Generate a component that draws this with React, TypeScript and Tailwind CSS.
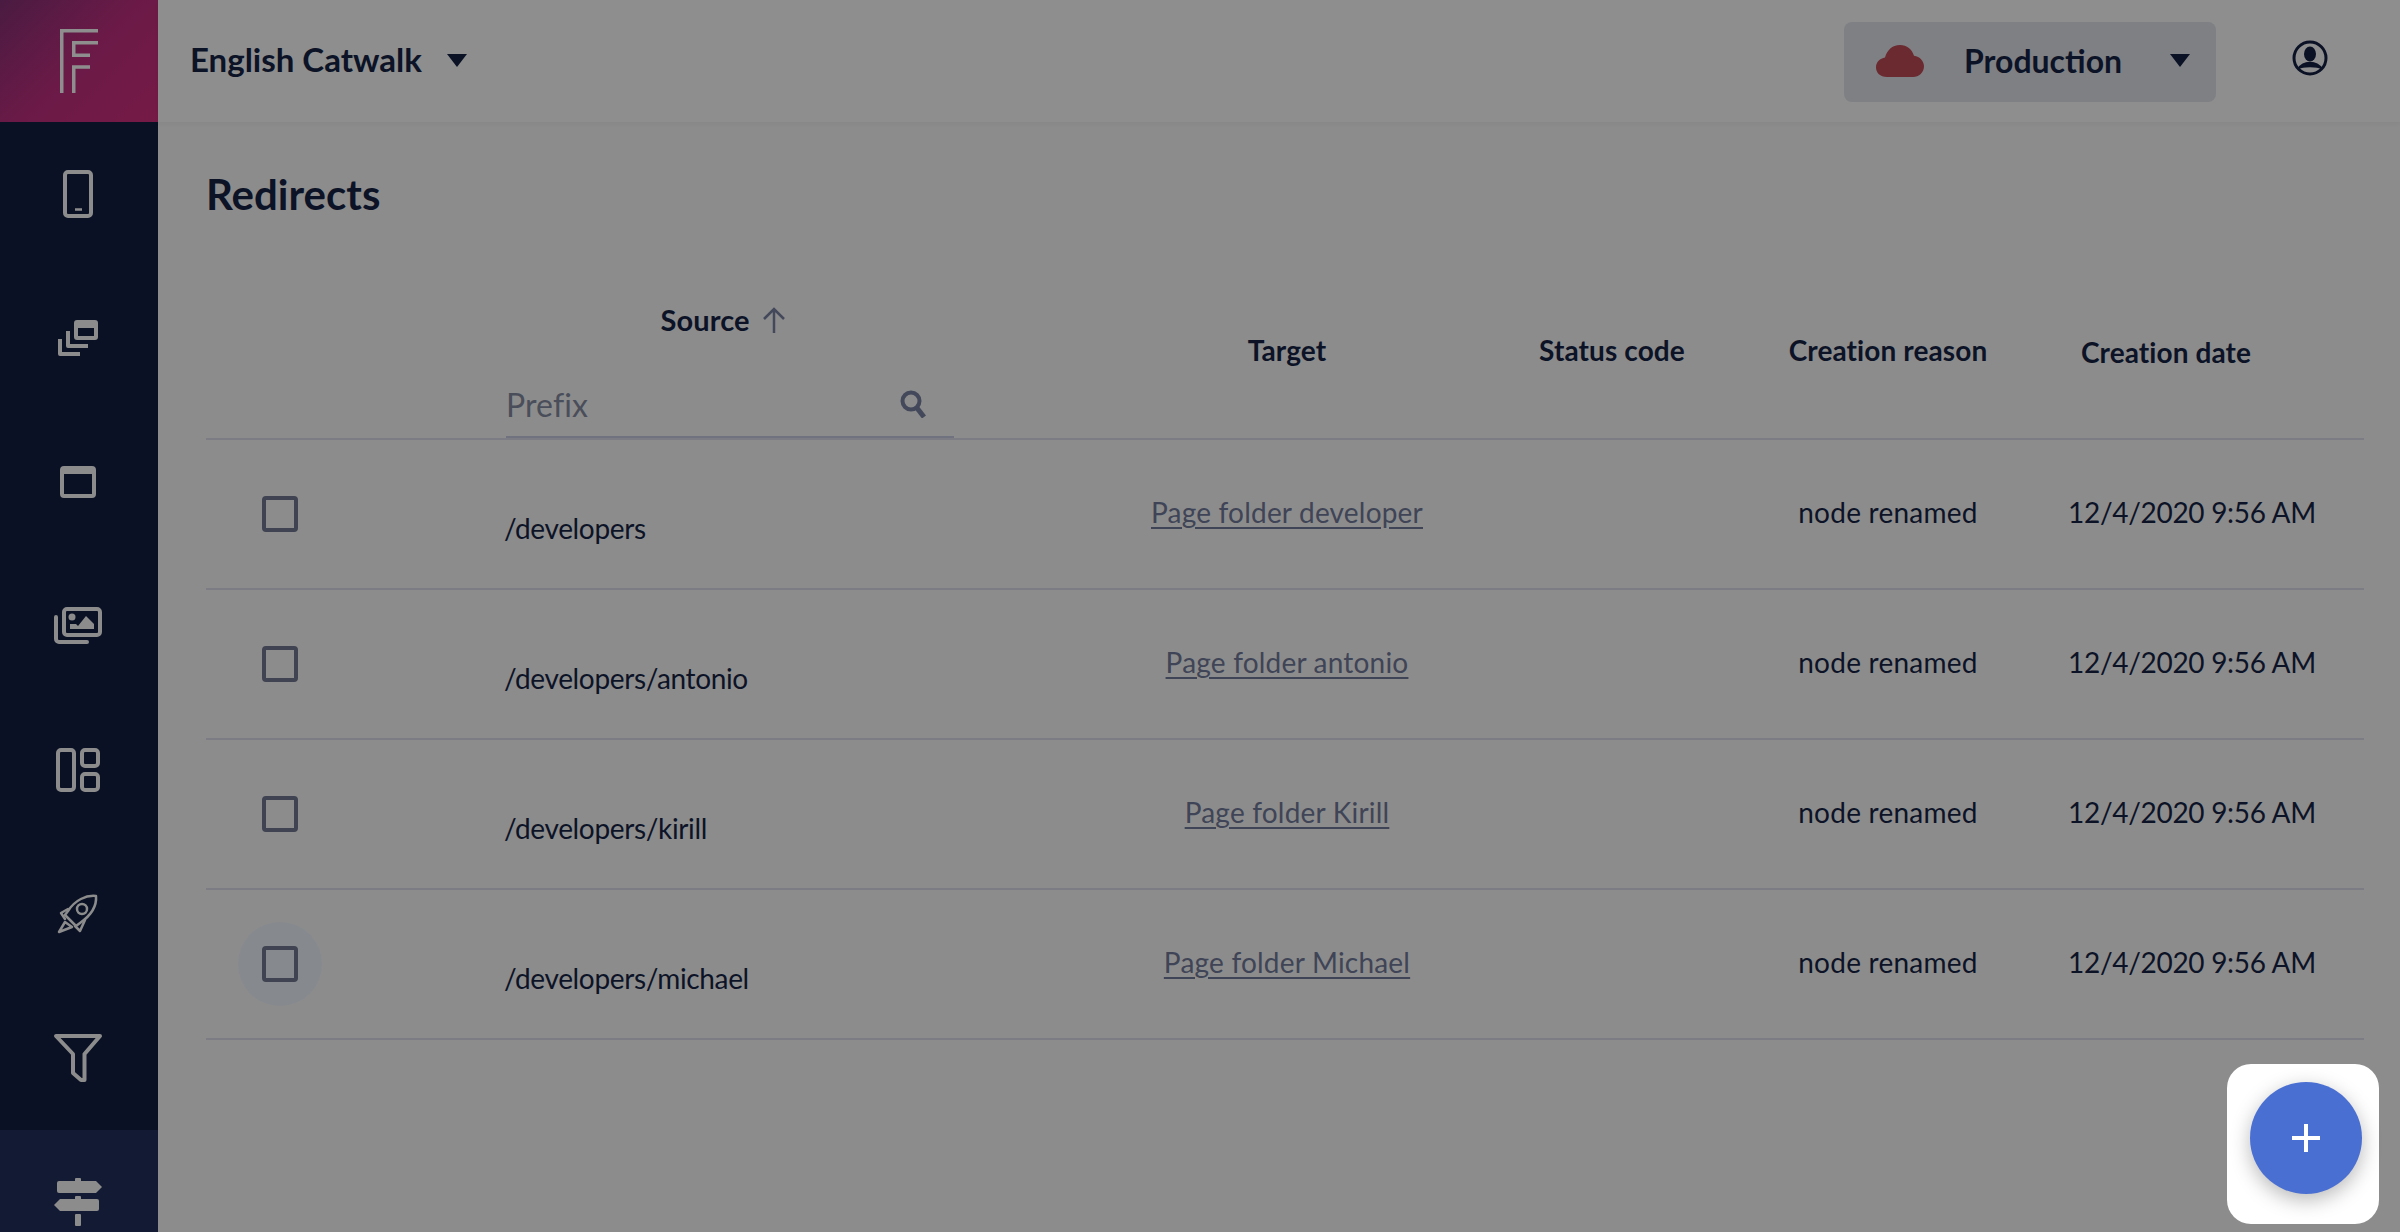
const rows = [
  { source: "/developers", target: "Page folder developer" },
  { source: "/developers/antonio", target: "Page folder antonio" },
  { source: "/developers/kirill", target: "Page folder Kirill" },
  { source: "/developers/michael", target: "Page folder Michael", hover: true },
];

const gridCols = "grid grid-cols-[148px_752px_362px_288px_264px_292px_52px]";

function NavIcon({ children }: { children: React.ReactNode }) {
  return (
    <svg width="60" height="60" viewBox="0 0 60 60" fill="none" stroke="#8c8c8c" strokeWidth="4" strokeLinejoin="round" strokeLinecap="round">
      {children}
    </svg>
  );
}

const navIcons = [
  <NavIcon key="phone">
    <rect x="16" y="8" width="26" height="44" rx="3" />
    <path d="M26 45.5H33" strokeWidth="2.5" strokeLinecap="butt" />
  </NavIcon>,
  <NavIcon key="stack">
    <path fillRule="evenodd" fill="#8c8c8c" stroke="none" d="M28 12H46A3 3 0 0 1 49 15V29A3 3 0 0 1 46 32H28A3 3 0 0 1 25 29V15A3 3 0 0 1 28 12ZM29 20V28H45V20Z" />
    <path d="M19 23V38H39M11 31V46H31" strokeLinecap="butt" strokeLinejoin="round" />
  </NavIcon>,
  <NavIcon key="window">
    <rect x="13" y="16" width="32" height="28" rx="2" />
    <rect x="13" y="15" width="32" height="7" fill="#8c8c8c" stroke="none" />
  </NavIcon>,
  <NavIcon key="images">
    <rect x="15" y="13" width="36" height="26" rx="3" />
    <path d="M7 21V43A3 3 0 0 0 10 46H38" />
    <circle cx="23" cy="21" r="3.5" fill="#8c8c8c" stroke="none" />
    <path d="M21 33V28H27L29 30L37 20L45 28V33Z" fill="#8c8c8c" stroke="none" />
  </NavIcon>,
  <NavIcon key="layout">
    <rect x="9" y="10" width="16" height="40" rx="3" />
    <rect x="33" y="10" width="16" height="16" rx="3" />
    <rect x="33" y="34" width="16" height="16" rx="3" />
  </NavIcon>,
  <NavIcon key="rocket">
    <g strokeWidth="2.5">
      <path d="M47 12C37 11 26 16 19 27L16 31L27 42L31 39C41 32 48 23 47 12Z" />
      <path d="M19 25L12 29L16 35M36 36L31 47L26 42" />
      <path d="M16 38L10 48L23 43Z" />
      <circle cx="33" cy="25" r="5" />
    </g>
  </NavIcon>,
  <NavIcon key="filter">
    <path d="M7 8H51L35.5 26V52H32L24 45V26Z" />
  </NavIcon>,
  <NavIcon key="sign">
    <g fill="#8c8c8c" stroke="none">
      <path d="M10 9H47L53 15L47 21H10A2 2 0 0 1 8 19V11A2 2 0 0 1 10 9Z" />
      <path d="M11 27H48A2 2 0 0 1 50 29V37A2 2 0 0 1 48 39H11L5 33Z" />
      <rect x="26" y="6" width="6" height="4" rx="1" />
      <rect x="26" y="24" width="6" height="4" rx="1" />
      <rect x="26" y="42" width="6" height="12" rx="1" />
    </g>
  </NavIcon>,
];

function Logo() {
  return (
    <svg width="38" height="64" viewBox="0 0 38 64" fill="none" stroke="#8e8e8e" strokeWidth="3.5">
      <path d="M1.750 64V1.750H38" />
      <path d="M38 13.750H13.750V26.250H30" />
      <path d="M13.750 64V38H30" />
    </svg>
  );
}

function Caret() {
  return (
    <svg width="20" height="13" viewBox="0 0 20 13">
      <path d="M0 0H20L10 13Z" fill="#0b1226" />
    </svg>
  );
}

function SourceArrow() {
  return (
    <svg width="24" height="26" viewBox="0 0 24 26" fill="none" stroke="#43485a" strokeWidth="2.5">
      <path d="M12 26V2M2 12L12 2L22 12" />
    </svg>
  );
}

export default function App() {
  return (
    <div className="relative flex h-[1232px] w-[2400px] overflow-hidden bg-[#8c8c8c] font-['Lato',sans-serif] text-[#0c1327]">
      <aside className="flex w-[158px] shrink-0 flex-col bg-[#0a1124]">
        <div className="flex h-[122px] shrink-0 items-center justify-center bg-[linear-gradient(135deg,#4a1b42_0%,#6b1a47_50%,#761a47_100%)]">
          <Logo />
        </div>
        {navIcons.map((icon, i) => (
          <div key={i} className={`flex h-[144px] shrink-0 items-center justify-center ${i === 7 ? "bg-[#121b33]" : ""}`}>
            {icon}
          </div>
        ))}
      </aside>

      <div className="flex min-w-0 flex-1 flex-col">
        <header className="flex h-[122px] shrink-0 items-center bg-[#8e8e8e] pl-[32px] shadow-[0_2px_4px_rgba(0,0,0,0.04)]">
          <span className="mb-[4px] text-[33px] font-bold leading-none">English Catwalk</span>
          <span className="ml-[25px] mb-[1px] flex"><Caret /></span>
          <div className="ml-auto mt-[2px] flex h-[80px] w-[372px] items-center rounded-[8px] bg-[#7f8084] pl-[32px] pr-[26px]">
            <svg className="mb-[2px]" width="48" height="32" viewBox="0 0 48 36" preserveAspectRatio="none">
              <path d="M11 36C4 36 0 31 0 25C0 19 4 15 9 14C11 6 16 0 24 0C31 0 36 5 38 12C44 13 48 18 48 24C48 31 43 36 37 36Z" fill="#6a2a30" />
            </svg>
            <span className="ml-[40px] mb-[2px] text-[32px] font-bold leading-none">Production</span>
            <span className="ml-auto mb-[4px] flex"><Caret /></span>
          </div>
          <div className="ml-[76px] mr-[72px] mb-[6px] flex">
            <svg width="36" height="36" viewBox="0 0 36 36" fill="none">
              <circle cx="18" cy="18" r="16" stroke="#0b1226" strokeWidth="3" />
              <ellipse cx="18" cy="14" rx="6" ry="7.5" fill="#0b1226" />
              <path d="M6 29C9 24 13 22.500 18 22.500C23 22.500 27 24 30 29C26 25.500 10 25.500 6 29Z" fill="#0b1226" stroke="#0b1226" strokeWidth="1.500" />
            </svg>
          </div>
        </header>

        <main className="min-h-0 flex-1 pl-[48px] pr-[36px]">
          <h1 className="flex h-[144px] items-center text-[42px] font-bold leading-none">Redirects</h1>

          <div className={`${gridCols} h-[174px] border-b-2 border-[#7c7d84] text-[28px] font-bold leading-[32px] tracking-[0.1px]`}>
            <div />
            <div className="flex flex-col items-center pt-[38px]">
              <div className="mr-[14px] flex items-center gap-[12px]">
                <span className="text-[29px]">Source</span>
                <SourceArrow />
              </div>
              <div className="mt-[44px] flex h-[58px] w-[448px] items-center justify-between border-b-2 border-[#70727f] pb-[8px] font-normal">
                <input
                  readOnly
                  placeholder="Prefix"
                  className="w-[300px] bg-transparent text-[32px] outline-none placeholder:text-[#4a4e5a]"
                />
                <svg className="mr-[28px]" width="26" height="28" viewBox="0 0 26 28" fill="none" stroke="#43485a">
                  <circle cx="11" cy="11" r="8.500" strokeWidth="4" />
                  <path d="M17 18L24 27" strokeWidth="5" />
                </svg>
              </div>
            </div>
            <div className="pt-[68px] text-center">Target</div>
            <div className="pt-[68px] text-center">Status code</div>
            <div className="pt-[68px] text-center">Creation reason</div>
            <div className="pt-[70px] text-center">Creation date</div>
            <div />
          </div>

          {rows.map((row) => (
            <div key={row.source} className={`${gridCols} h-[150px] items-center border-b-2 border-[#7c7d84] text-[28px] leading-[36px]`}>
              <div className="flex justify-center">
                <div className={`flex size-[84px] items-center justify-center rounded-full ${row.hover ? "bg-[#868a8e]" : ""}`}>
                  <div className="size-[36px] rounded-[4px] border-4 border-[#3f4352]" />
                </div>
              </div>
              <div className="pl-[150px] pt-[28px] tracking-[-0.35px]">{row.source}</div>
              <div className="mb-[4px] text-center tracking-[0.2px] text-[#3f4456] underline underline-offset-4">{row.target}</div>
              <div />
              <div className="mb-[4px] text-center tracking-[0.25px]">node renamed</div>
              <div className="col-span-2 mb-[4px] text-center tracking-[-0.3px]">12/4/2020 9:56 AM</div>
            </div>
          ))}
        </main>
      </div>

      <div className="absolute left-[2227px] top-[1064px] h-[160px] w-[152px] rounded-[24px] bg-white" />
      <button className="absolute left-[2250px] top-[1082px] flex size-[112px] items-center justify-center rounded-full bg-[#4a6fd3] shadow-[0_6px_20px_rgba(0,0,0,0.28)]">
        <svg width="28" height="28" viewBox="0 0 28 28" fill="#ffffff">
          <rect x="12" width="4" height="28" />
          <rect y="12" width="28" height="4" />
        </svg>
      </button>
    </div>
  );
}
